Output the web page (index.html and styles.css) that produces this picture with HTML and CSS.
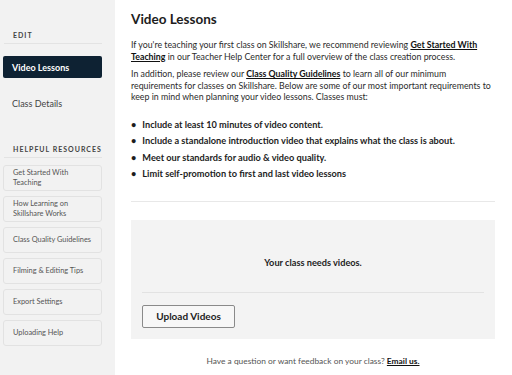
FILE: index.html
```html
<!DOCTYPE html>
<html lang="en">
<head>
    <meta charset="UTF-8">
    <meta name="viewport" content="width=device-width, initial-scale=1.0">
    <title>Video Lessons</title>
    <link rel="stylesheet" href="styles.css">
</head>
<body>
    <div class="layout">
        <aside class="sidebar">
            <div class="side-label edit-label">Edit</div>
            <nav class="side-nav">
                <a class="nav-item active" href="#">Video Lessons</a>
                <a class="nav-item" href="#">Class Details</a>
            </nav>
            <div class="side-label res-label">Helpful Resources</div>
            <div class="res-list">
                <a class="res-item" href="#">Get Started With Teaching</a>
                <a class="res-item" href="#">How Learning on Skillshare Works</a>
                <a class="res-item" href="#">Class Quality Guidelines</a>
                <a class="res-item" href="#">Filming &amp; Editing Tips</a>
                <a class="res-item" href="#">Export Settings</a>
                <a class="res-item" href="#">Uploading Help</a>
            </div>
        </aside>

        <main class="main">
            <h1>Video Lessons</h1>
            <p>If you're teaching your first class on Skillshare, we recommend reviewing <a href="#">Get Started With Teaching</a> in our Teacher Help Center for a full overview of the class creation process.</p>
            <p>In addition, please review our <a href="#">Class Quality Guidelines</a> to learn all of our minimum requirements for classes on Skillshare. Below are some of our most important requirements to keep in mind when planning your video lessons. Classes must:</p>
            <ul class="rules">
                <li>Include at least 10 minutes of video content.</li>
                <li>Include a standalone introduction video that explains what the class is about.</li>
                <li>Meet our standards for audio &amp; video quality.</li>
                <li>Limit self-promotion to first and last video lessons</li>
            </ul>
            <hr class="divider">

            <div class="upload-box">
                <div class="empty-msg">Your class needs videos.</div>
                <div class="upload-foot">
                    <button class="upload-btn">Upload Videos</button>
                </div>
            </div>

            <p class="help">Have a question or want feedback on your class? <a href="#">Email us.</a></p>
        </main>
    </div>
</body>
</html>
```

FILE: styles.css
```css
body {
    margin: 0;
    font-family: Lato, "Liberation Sans", sans-serif;
    color: #2b2b2b;
    background: #fff;
}
a {
    color: inherit;
    text-decoration: none;
}
.layout {
    display: flex;
    min-height: 375px;
}
.sidebar {
    width: 115px;
    flex-shrink: 0;
    background: #f2f2f2;
    padding: 31px 13px 0 3px;
    box-sizing: border-box;
}
.side-label {
    font-size: 7px;
    font-weight: 700;
    letter-spacing: 1px;
    text-transform: uppercase;
    color: #444;
    padding: 0 0 4px 9px;
    margin-left: 1px;
    border-bottom: 1px solid #e3e3e3;
}
.side-nav {
    display: flex;
    flex-direction: column;
    gap: 14px;
    margin-top: 12px;
}
.nav-item {
    display: flex;
    align-items: center;
    height: 22px;
    padding-left: 9px;
    font-size: 9px;
    color: #444;
    border-radius: 2px;
}
.nav-item.active {
    background: #0e2233;
    color: #fff;
    font-weight: 700;
}
.res-label {
    margin-top: 31px;
}
.res-list {
    display: flex;
    flex-direction: column;
    gap: 5px;
    margin-top: 7px;
}
.res-item {
    display: flex;
    align-items: center;
    height: 26px;
    box-sizing: border-box;
    padding: 0 6px 0 9px;
    border: 1px solid #e2e2e2;
    border-radius: 3px;
    font-size: 7.4px;
    line-height: 10px;
    color: #555;
}
.main {
    flex: 1;
    padding: 11px 17px 0 16px;
    box-sizing: border-box;
}
h1 {
    font-size: 13.5px;
    font-weight: 700;
    margin: 0 0 12px;
    color: #1d1d1d;
}
.main p {
    font-size: 8.8px;
    line-height: 11.5px;
    margin: 0 0 6px;
}
.main p a,
.help a {
    font-weight: 700;
    color: #111;
    text-decoration: underline;
}
.rules {
    list-style: none;
    margin: 16px 0 0;
    padding: 0;
    display: flex;
    flex-direction: column;
    gap: 5.5px;
}
.rules li {
    font-size: 9.2px;
    font-weight: 700;
    line-height: 11px;
    color: #1d1d1d;
}
.rules li::before {
    content: "\2022";
    margin-right: 6px;
}
.divider {
    border: none;
    border-top: 1px solid #e8e8e8;
    margin: 22px 0 0;
}
.upload-box {
    background: #f3f3f3;
    margin-top: 18px;
    padding: 0 11px 11px;
}
.empty-msg {
    text-align: center;
    font-size: 9.2px;
    font-weight: 700;
    color: #1d1d1d;
    padding: 37px 0 24px;
    border-bottom: 1px solid #e2e2e2;
}
.upload-foot {
    padding-top: 11px;
}
.upload-btn {
    font-family: inherit;
    font-size: 10px;
    font-weight: 700;
    color: #1d1d1d;
    background: #f7f7f7;
    border: 1px solid #8a8a8a;
    border-radius: 2px;
    width: 93px;
    height: 23px;
    cursor: pointer;
}
.main p.help {
    text-align: center;
    font-size: 8.4px;
    color: #555;
    margin: 17px 0 0;
}
```
